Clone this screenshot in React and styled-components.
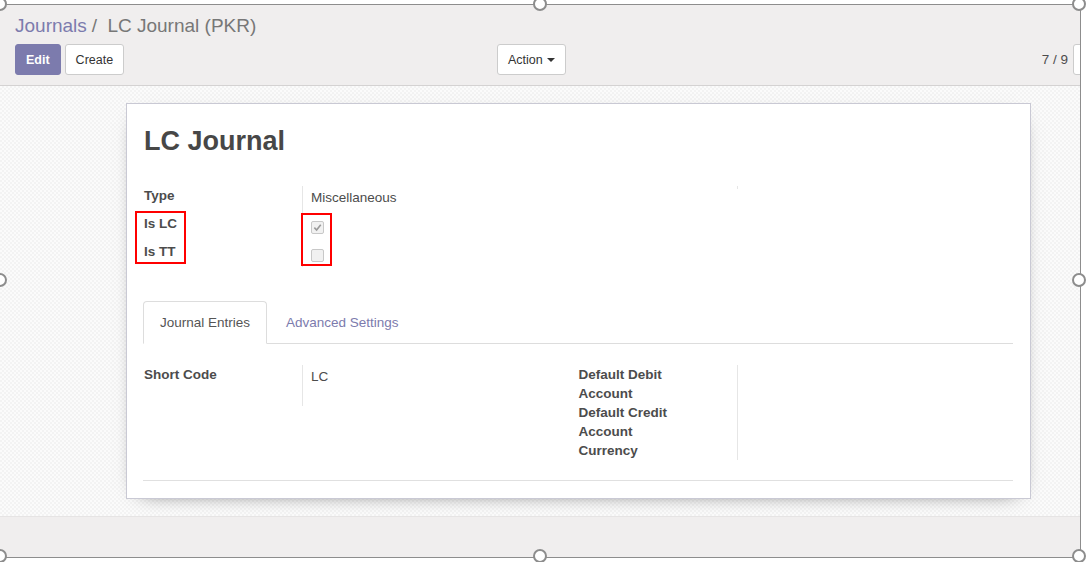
import React from "react";
import styled, { createGlobalStyle } from "styled-components";

const GlobalStyle = createGlobalStyle`
  html, body {
    margin: 0;
    padding: 0;
    background: #fff;
  }
  body {
    font-family: "Liberation Sans", Arial, sans-serif;
    color: #4c4c4c;
  }
  #root {
    width: 1090px;
    height: 562px;
    overflow: hidden;
  }
`;

const Page = styled.div`
  width: 1090px;
  height: 562px;
  padding-top: 4px;
  box-sizing: border-box;
  background: #fff;
`;

const Frame = styled.div`
  position: relative;
  width: 1081px;
  height: 554px;
  box-sizing: border-box;
  border-top: 1.5px solid #8d8d8d;
  border-right: 1.5px solid #8d8d8d;
  border-bottom: 1.5px solid #8d8d8d;
`;

const Viewport = styled.div`
  width: 100%;
  height: 100%;
  overflow: hidden;
  background: #f0eeee;
`;

const Screen = styled.div`
  width: 1141px;
  height: 100%;
  display: flex;
  flex-direction: column;
`;

const Handle = styled.span`
  position: absolute;
  width: 10px;
  height: 10px;
  border: 2px solid #8d8d8d;
  border-radius: 50%;
  background: #fff;
  z-index: 2;
`;

const ControlPanel = styled.div`
  flex: none;
  padding: 7px 15px 10px 15px;
  border-bottom: 1px solid #d4d2d2;
`;

const Breadcrumb = styled.div`
  font-size: 19px;
  line-height: 28px;
  color: #777;
  white-space: nowrap;
`;

const Crumb = styled.span`
  color: #7c7bad;
`;

const Slash = styled.span`
  padding: 0 5px;
`;

const ButtonRow = styled.div`
  margin-top: 4px;
  display: grid;
  grid-template-columns: 482px auto 1fr auto;
  align-items: center;
`;

const ButtonGroup = styled.div`
  display: flex;
  gap: 4px;
`;

const Button = styled.button`
  height: 31px;
  padding: 0 10px;
  border: 1px solid ${(p) => (p.$primary ? "#7c7bad" : "#ccc")};
  border-radius: 3px;
  background: ${(p) => (p.$primary ? "#7c7bad" : "#fff")};
  color: ${(p) => (p.$primary ? "#fff" : "#333")};
  font-family: inherit;
  font-size: 12.5px;
  font-weight: ${(p) => (p.$primary ? "bold" : "normal")};
  display: flex;
  align-items: center;
  gap: 4px;
  cursor: pointer;
`;

const Caret = styled.span`
  width: 0;
  height: 0;
  border-left: 4px solid transparent;
  border-right: 4px solid transparent;
  border-top: 4px solid #333;
  margin-top: 1px;
`;

const Pager = styled.div`
  grid-column: 4;
  display: flex;
  align-items: center;
  gap: 6px;
  font-size: 13.5px;
  color: #4c4c4c;
`;

const PagerButtons = styled.div`
  display: flex;
`;

const PagerButton = styled.button`
  width: 27px;
  height: 31px;
  border: 1px solid #ccc;
  background: #fff;
  margin-left: -1px;
  border-radius: ${(p) => (p.$first ? "3px 0 0 3px" : "0 3px 3px 0")};
`;

const FormArea = styled.div`
  flex: none;
  height: 430px;
  box-sizing: border-box;
  padding-top: 17px;
  background-color: #f8f8f8;
  background-image: repeating-conic-gradient(#f3f3f3 0 25%, #fbfbfb 0 50%);
  background-size: 4px 4px;
`;

const Sheet = styled.div`
  margin-left: 126px;
  width: 905px;
  height: 396px;
  box-sizing: border-box;
  padding: 17px;
  background: #fff;
  border: 1px solid #c9c9d4;
  box-shadow: 0 5px 20px -15px #000;
`;

const Title = styled.h1`
  margin: 5px 0 0;
  font-size: 27px;
  line-height: 31px;
  font-weight: bold;
  color: #474747;
`;

const GroupRow = styled.div`
  display: flex;
  margin-top: ${(p) => p.$top || 0}px;
`;

const Group = styled.div`
  position: relative;
  width: 50%;
  display: grid;
  grid-template-columns: 158px 1fr;
  align-content: start;
`;

const Label = styled.div`
  font-size: 13.5px;
  line-height: 19px;
  font-weight: bold;
  color: #4c4c4c;
  padding-top: ${(p) => p.$pad || 0}px;
  padding-right: 16px;
`;

const LabelText = styled.span`
  display: block;
  max-width: 120px;
`;

const Value = styled.div`
  border-left: 1px solid #e6e6e6;
  padding-left: 8px;
  padding-top: ${(p) => p.$pad || 0}px;
  min-height: ${(p) => p.$min || 0}px;
  box-sizing: border-box;
  font-size: 13.5px;
  line-height: 19px;
  color: #4c4c4c;
`;

const Checkbox = styled.span`
  display: flex;
  align-items: center;
  justify-content: center;
  width: 11px;
  height: 11px;
  margin-top: 10px;
  border: 1px solid #c8c8c8;
  border-radius: 2px;
  background: #f1f1f1;
`;

const Annotation = styled.span`
  position: absolute;
  border: 2.5px solid #ff0000;
  box-sizing: border-box;
`;

const Notebook = styled.div`
  margin-top: 34px;
  margin-left: -1px;
`;

const Tabs = styled.div`
  display: flex;
  border-bottom: 1px solid #ddd;
`;

const Tab = styled.div`
  height: 41px;
  line-height: 41px;
  padding: 0 16px;
  margin-bottom: -1px;
  margin-right: 2px;
  font-size: 13.5px;
  border: 1px solid ${(p) => (p.$active ? "#ddd" : "transparent")};
  border-bottom-color: ${(p) => (p.$active ? "#fff" : "transparent")};
  border-radius: 4px 4px 0 0;
  background: ${(p) => (p.$active ? "#fff" : "transparent")};
  color: ${(p) => (p.$active ? "#555" : "#7c7bad")};
`;

const TabContent = styled.div`
  padding: 21px 0 20px 1px;
  border-bottom: 1px solid #e0e0e0;
`;

const Footer = styled.div`
  flex: 1;
  background: #f0eeee;
  border-top: 1px solid #e6e4e4;
`;

const CheckBox = ({ checked }) => (
  <Checkbox>
    {checked && (
      <svg width="9" height="9" viewBox="0 0 10 10">
        <path d="M1.5 5.2 L4 7.8 L8.6 2" fill="none" stroke="#9a9a9a" strokeWidth="1.8" />
      </svg>
    )}
  </Checkbox>
);

const handles = [
  [-7, -8], [533, -8], [1072, -8],
  [-7, 268], [1072, 268],
  [-7, 544], [533, 544], [1072, 544],
];

const App = () => {
  return (
    <>
      <GlobalStyle />
      <Page>
        <Frame>
          <Viewport>
            <Screen>
              <ControlPanel>
                <Breadcrumb>
                  <Crumb>Journals</Crumb>
                  <Slash>/</Slash>
                  {"\u00a0"}LC Journal (PKR)
                </Breadcrumb>
                <ButtonRow>
                  <ButtonGroup>
                    <Button $primary>Edit</Button>
                    <Button>Create</Button>
                  </ButtonGroup>
                  <div>
                    <Button>
                      Action <Caret />
                    </Button>
                  </div>
                  <Pager>
                    7 / 9
                    <PagerButtons>
                      <PagerButton $first />
                      <PagerButton />
                    </PagerButtons>
                  </Pager>
                </ButtonRow>
              </ControlPanel>

              <FormArea>
                <Sheet>
                  <Title>LC Journal</Title>

                  <GroupRow $top={29}>
                    <Group>
                      <Label>Type</Label>
                      <Value $pad={2} $min={25}>Miscellaneous</Value>
                      <Label $pad={3}>Is LC</Label>
                      <Value $min={28}>
                        <CheckBox checked />
                      </Value>
                      <Label $pad={3}>Is TT</Label>
                      <Value $min={28}>
                        <CheckBox />
                      </Value>
                      <Annotation style={{ left: -9, top: 25, width: 51, height: 53 }} />
                      <Annotation style={{ left: 157, top: 27, width: 31, height: 53 }} />
                    </Group>
                    <Group>
                      <Label />
                      <Value $min={3} />
                    </Group>
                  </GroupRow>

                  <Notebook>
                    <Tabs>
                      <Tab $active>Journal Entries</Tab>
                      <Tab>Advanced Settings</Tab>
                    </Tabs>
                    <TabContent>
                      <GroupRow>
                        <Group>
                          <Label>Short Code</Label>
                          <Value $pad={2} $min={41}>LC</Value>
                        </Group>
                        <Group>
                          <Label><LabelText>Default Debit Account</LabelText></Label>
                          <Value />
                          <Label><LabelText>Default Credit Account</LabelText></Label>
                          <Value />
                          <Label><LabelText>Currency</LabelText></Label>
                          <Value />
                        </Group>
                      </GroupRow>
                    </TabContent>
                  </Notebook>
                </Sheet>
              </FormArea>

              <Footer />
            </Screen>
          </Viewport>
          {handles.map(([x, y], i) => (
            <Handle key={i} style={{ left: x, top: y }} />
          ))}
        </Frame>
      </Page>
    </>
  );
};

export default App;
